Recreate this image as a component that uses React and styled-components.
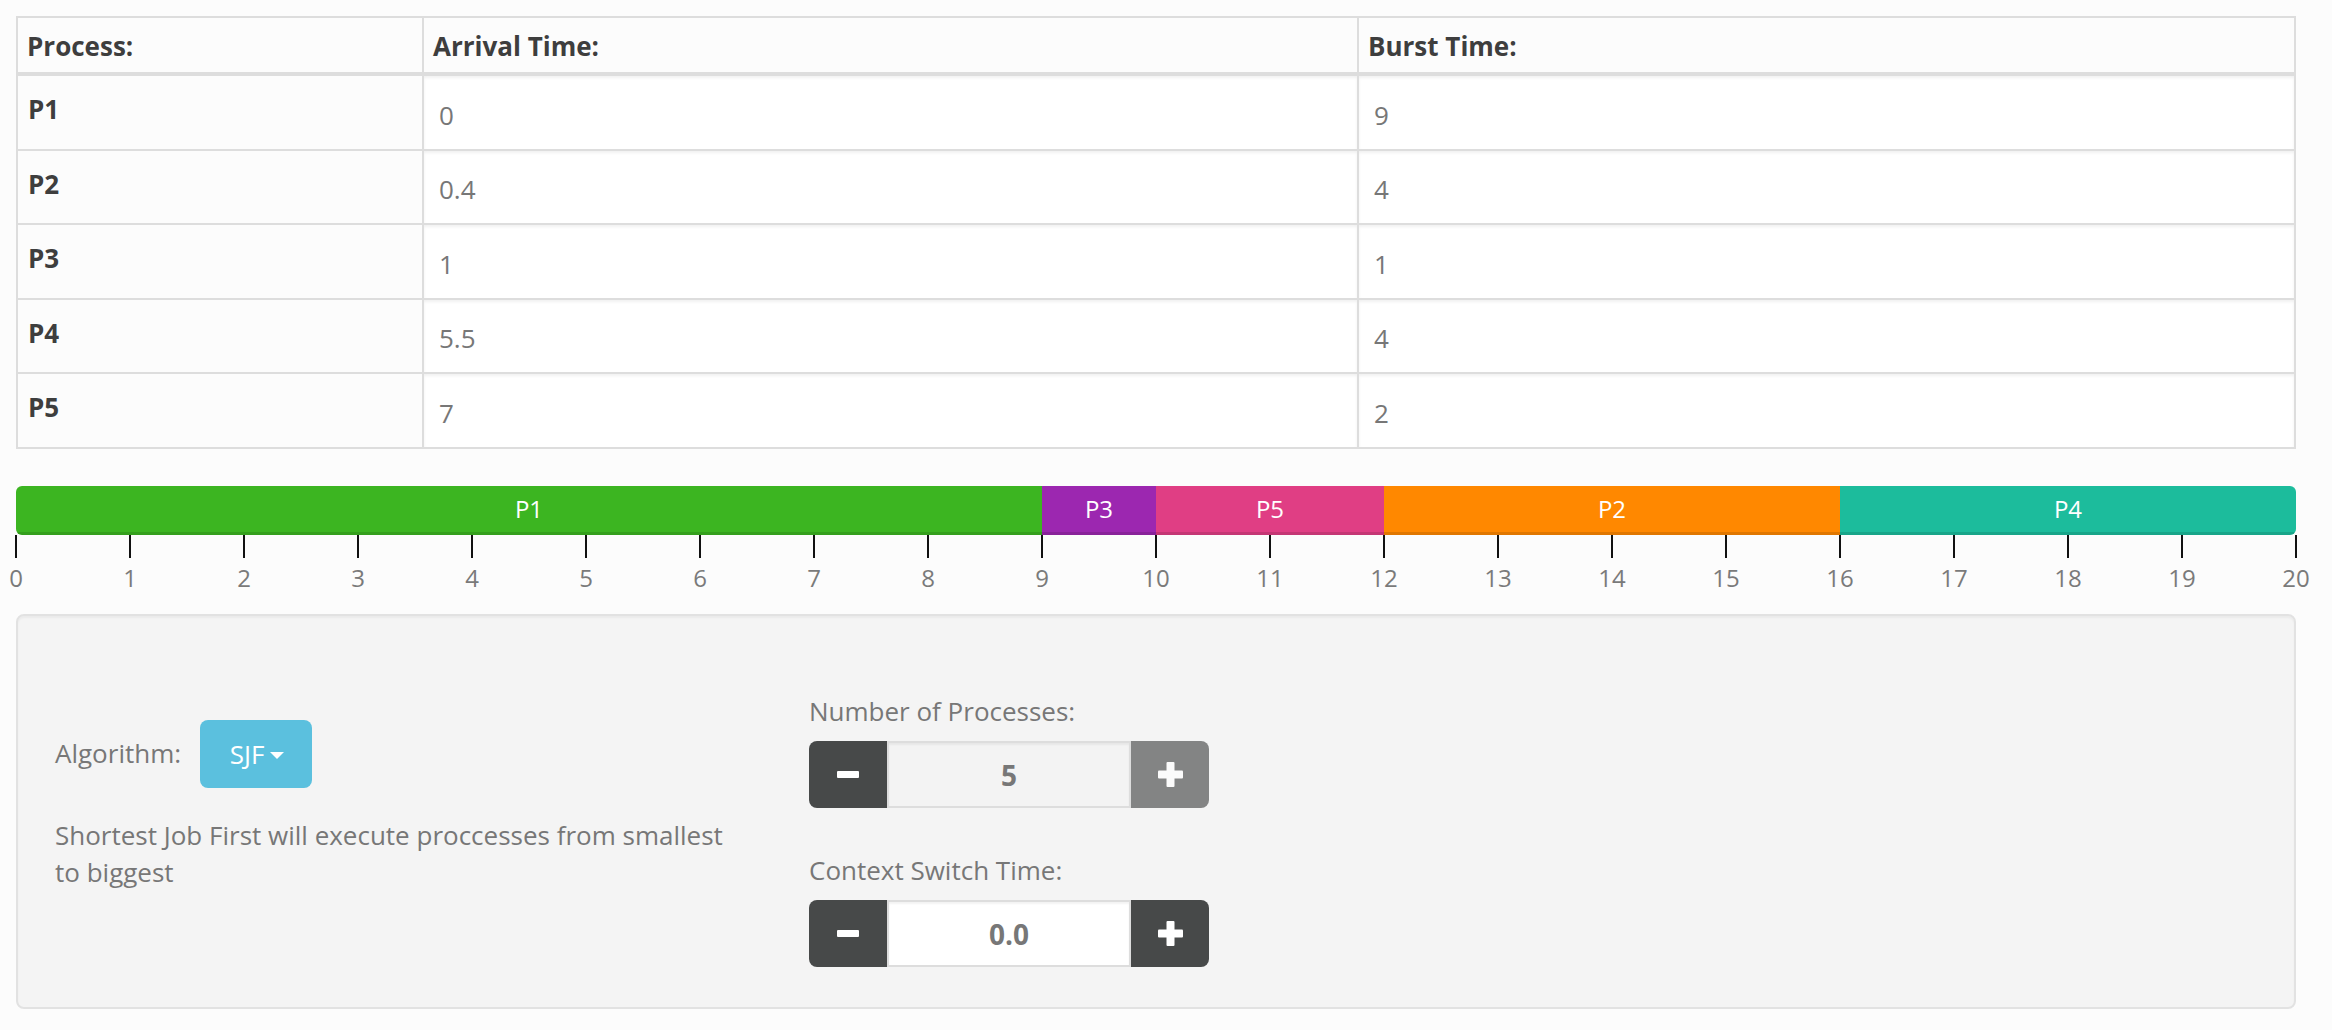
import React from "react";
import styled, { createGlobalStyle } from "styled-components";

const processes = [
  { name: "P1", arrival: "0", burst: "9" },
  { name: "P2", arrival: "0.4", burst: "4" },
  { name: "P3", arrival: "1", burst: "1" },
  { name: "P4", arrival: "5.5", burst: "4" },
  { name: "P5", arrival: "7", burst: "2" },
];

const schedule = [
  { name: "P1", units: 9, color: "#3cb521" },
  { name: "P3", units: 1, color: "#9c27b0" },
  { name: "P5", units: 2, color: "#e03e84" },
  { name: "P2", units: 4, color: "#ff8800" },
  { name: "P4", units: 4, color: "#1cbc9c" },
];

const ticks = Array.from({ length: 21 }, (_, i) => i);

const GlobalStyle = createGlobalStyle`
  * { box-sizing: border-box; }
  body {
    margin: 0;
    background: #fcfcfc;
    font-family: "Open Sans", "DejaVu Sans", sans-serif;
    font-size: 26px;
    line-height: 37px;
    color: #777;
  }
`;

const Page = styled.div`
  width: 2332px;
  overflow: hidden;
  padding-bottom: 20px;
`;

const Table = styled.table`
  margin: 16px 0 0 16px;
  width: 2280px;
  table-layout: fixed;
  border-collapse: separate;
  border-spacing: 0;
  border: 2px solid #ddd;

  tbody tr {
    height: 72.5px;
  }
  tbody tr + tr td {
    border-top: 2px solid #ddd;
  }
  th + th,
  td + td {
    border-left: 2px solid #ddd;
  }
`;

const HeadCell = styled.th`
  padding: 10px 9px 7px;
  text-align: left;
  font-weight: 700;
  color: #3e3e3e;
  border-bottom: 4px solid #ddd;
`;

const NameCell = styled.td`
  padding: 15px 10px 0;
  vertical-align: top;
  font-weight: 700;
  color: #3e3e3e;
`;

const ValueCell = styled.td`
  padding: 0;
  vertical-align: top;
`;

const ValueField = styled.div`
  height: 72.5px;
  display: flex;
  align-items: center;
  padding: 6px 15px 0;
  background: #fff;
  box-shadow: inset 0 2px 3px rgba(0, 0, 0, 0.06);
  color: #777;
`;

const Gantt = styled.div`
  margin: 37px 0 0 16px;
  width: 2280px;
  height: 49px;
  display: flex;
  border-radius: 6px;
  overflow: hidden;
`;

const Segment = styled.div`
  flex: ${(p) => p.units} 0 0;
  background: ${(p) => p.color};
  box-shadow: inset 0 -3px 0 rgba(0, 0, 0, 0.12);
  display: flex;
  align-items: center;
  justify-content: center;
  padding-bottom: 3px;
  color: #fff;
  font-size: 24px;
`;

const Axis = styled.div`
  margin-left: -41px;
  display: grid;
  grid-template-columns: repeat(21, 114px);
`;

const Tick = styled.div`
  display: flex;
  flex-direction: column;
  align-items: center;
`;

const TickMark = styled.div`
  width: 2px;
  height: 23px;
  background: #111;
`;

const TickLabel = styled.div`
  margin-top: 3px;
  font-size: 24px;
  line-height: 34px;
  color: #7a7a7a;
`;

const Panel = styled.div`
  margin: 19px 0 0 16px;
  width: 2280px;
  padding: 77px 37px 40px;
  background: #f4f4f4;
  border: 2px solid #e2e2e2;
  border-radius: 8px;
  box-shadow: inset 0 2px 2px rgba(0, 0, 0, 0.04);
  display: grid;
  grid-template-columns: 720px 400px;
  column-gap: 34px;
  align-items: start;
`;

const LeftColumn = styled.div`
  margin-top: 27px;
`;

const AlgorithmRow = styled.div`
  display: flex;
  align-items: center;
  gap: 19px;
`;

const Dropdown = styled.button`
  height: 68px;
  width: 112px;
  padding: 0 0 0 2px;
  display: flex;
  align-items: center;
  justify-content: center;
  gap: 6px;
  background: #5bc0de;
  border: none;
  border-radius: 8px;
  color: #fff;
  font-family: inherit;
  font-size: 26px;
`;

const Caret = styled.span`
  width: 0;
  height: 0;
  margin-top: 3px;
  border-top: 7px solid #fff;
  border-left: 7px solid transparent;
  border-right: 7px solid transparent;
`;

const Description = styled.p`
  margin: 29px 0 0;
  max-width: 690px;
`;

const RightColumn = styled.div`
  display: flex;
  flex-direction: column;
`;

const FieldLabel = styled.div`
  margin-top: ${(p) => p.gap || 0}px;
`;

const Stepper = styled.div`
  margin-top: 11px;
  height: 67px;
  width: 400px;
  display: flex;
`;

const StepButton = styled.button`
  width: 78px;
  border: none;
  padding: 0;
  background: #474949;
  opacity: ${(p) => (p.disabled ? 0.65 : 1)};
  border-radius: ${(p) => (p.side === "left" ? "8px 0 0 8px" : "0 8px 8px 0")};
  display: flex;
  align-items: center;
  justify-content: center;
`;

const StepValue = styled.div`
  flex: 1;
  display: flex;
  align-items: center;
  justify-content: center;
  background: ${(p) => p.bg};
  border: 2px solid #ddd;
  box-shadow: inset 0 2px 2px rgba(0, 0, 0, 0.05);
  color: #777;
  font-weight: 700;
  font-size: 28px;
  padding-top: 2px;
`;

const MinusIcon = () => (
  <svg width="22" height="7" viewBox="0 0 22 7">
    <rect width="22" height="7" rx="1" fill="#fff" />
  </svg>
);

const PlusIcon = () => (
  <svg width="25" height="25" viewBox="0 0 25 25">
    <rect x="8.5" width="8" height="25" rx="1" fill="#fff" />
    <rect y="8.5" width="25" height="8" rx="1" fill="#fff" />
  </svg>
);

const NumberStepper = ({ value, bg, plusDisabled }) => (
  <Stepper>
    <StepButton side="left">
      <MinusIcon />
    </StepButton>
    <StepValue bg={bg}>{value}</StepValue>
    <StepButton side="right" disabled={plusDisabled}>
      <PlusIcon />
    </StepButton>
  </Stepper>
);

const App = () => {
  return (
    <Page>
      <GlobalStyle />
      <Table>
        <colgroup>
          <col style={{ width: "404px" }} />
          <col style={{ width: "935px" }} />
          <col />
        </colgroup>
        <thead>
          <tr>
            <HeadCell>Process:</HeadCell>
            <HeadCell>Arrival Time:</HeadCell>
            <HeadCell>Burst Time:</HeadCell>
          </tr>
        </thead>
        <tbody>
          {processes.map((p) => (
            <tr key={p.name}>
              <NameCell>{p.name}</NameCell>
              <ValueCell>
                <ValueField>{p.arrival}</ValueField>
              </ValueCell>
              <ValueCell>
                <ValueField>{p.burst}</ValueField>
              </ValueCell>
            </tr>
          ))}
        </tbody>
      </Table>

      <Gantt>
        {schedule.map((s) => (
          <Segment key={s.name} units={s.units} color={s.color}>
            {s.name}
          </Segment>
        ))}
      </Gantt>
      <Axis>
        {ticks.map((t) => (
          <Tick key={t}>
            <TickMark />
            <TickLabel>{t}</TickLabel>
          </Tick>
        ))}
      </Axis>

      <Panel>
        <LeftColumn>
          <AlgorithmRow>
            <span>Algorithm:</span>
            <Dropdown>
              SJF
              <Caret />
            </Dropdown>
          </AlgorithmRow>
          <Description>
            Shortest Job First will execute proccesses from smallest to biggest
          </Description>
        </LeftColumn>
        <RightColumn>
          <FieldLabel>Number of Processes:</FieldLabel>
          <NumberStepper value="5" bg="#f3f3f3" plusDisabled />
          <FieldLabel gap={44}>Context Switch Time:</FieldLabel>
          <NumberStepper value="0.0" bg="#fff" />
        </RightColumn>
      </Panel>
    </Page>
  );
};

export default App;
